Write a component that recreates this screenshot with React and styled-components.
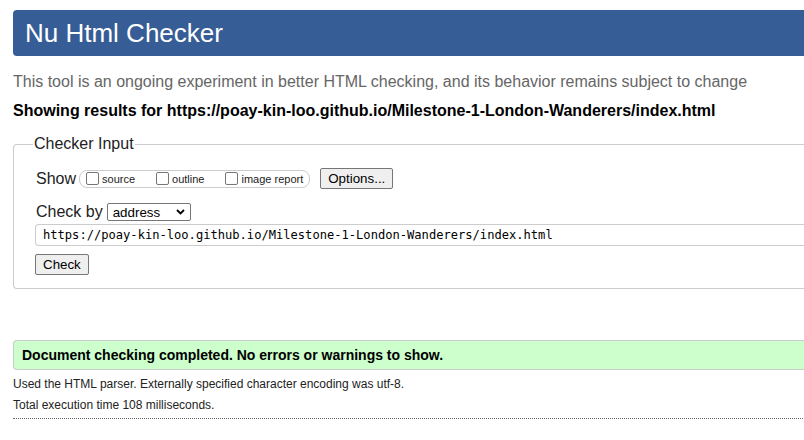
import React from 'react';
import styled, { createGlobalStyle } from 'styled-components';

const GlobalStyle = createGlobalStyle`
  html, body {
    margin: 0;
    padding: 0;
    background: #fff;
    overflow: hidden;
  }
  body {
    font-family: "Liberation Sans", Arial, sans-serif;
    color: #000;
  }
`;

const Page = styled.div`
  width: 830px;
  padding: 10px 0 0 13px;
`;

const Header = styled.h1`
  margin: 0;
  height: 46px;
  line-height: 46px;
  padding-left: 12px;
  background: #365d95;
  color: #fff;
  font-size: 26px;
  font-weight: normal;
  border-radius: 4px 0 0 4px;
`;

const Intro = styled.p`
  margin: 16px 0 0;
  font-size: 16px;
  line-height: 20px;
  color: #666;
`;

const Results = styled.p`
  margin: 10px 0 0;
  font-size: 16px;
  line-height: 18px;
  font-weight: bold;
`;

const Fieldset = styled.fieldset`
  margin: 15px 0 0;
  padding: 4px 0 13px 22px;
  border: 1px solid #ccc;
  border-right: none;
  border-radius: 4px 0 0 4px;
`;

const Legend = styled.legend`
  margin-left: -3px;
  padding: 0 1px;
  font-size: 16px;
  line-height: 18px;
  color: #222;
`;

const Row = styled.div`
  display: flex;
  align-items: center;
  margin-top: ${p => p.$top || 0}px;
`;

const Label = styled.span`
  font-size: 16px;
  color: #222;
`;

const Pill = styled.span`
  display: flex;
  align-items: center;
  height: 16px;
  padding: 0 6px 0 6px;
  border: 1px solid #ccc;
  border-radius: 8px;
  gap: 21px;
  margin-left: 3px;
`;

const Option = styled.label`
  display: flex;
  align-items: center;
  gap: 3px;
  font-size: 11px;
  color: #222;
`;

const Box = styled.input`
  appearance: none;
  margin: 0;
  width: 13px;
  height: 13px;
  border: 1px solid #767676;
  border-radius: 2px;
  background: #fff;
`;

const Button = styled.button`
  font-family: "Liberation Sans", Arial, sans-serif;
  font-size: 13.33px;
  height: 21px;
  padding: 0 ${p => p.$pad || 7}px;
  background: #efefef;
  color: #000;
  border: 1px solid #767676;
  border-radius: 2px;
  margin-left: ${p => p.$left || 0}px;
`;

const Select = styled.div`
  display: flex;
  align-items: center;
  justify-content: space-between;
  box-sizing: border-box;
  width: 84px;
  height: 18px;
  margin-left: 4px;
  padding: 0 5px 0 5px;
  border: 1px solid #767676;
  border-radius: 2px;
  font-size: 13.33px;
  color: #000;
`;

const UrlInput = styled.div`
  margin-top: 3px;
  margin-left: -1px;
  height: 20px;
  line-height: 20px;
  padding-left: 7px;
  border: 1px solid #ccc;
  border-right: none;
  border-radius: 4px 0 0 4px;
  font-family: "DejaVu Sans Mono", "Liberation Mono", monospace;
  font-size: 12.1px;
  color: #000;
`;

const CheckRow = styled.div`
  margin-top: 8px;
  margin-left: -1px;
`;

const Success = styled.p`
  margin: 51px 0 0;
  height: 28px;
  line-height: 28px;
  padding-left: 8px;
  background: #ccffcc;
  border: 1px solid #ccc;
  border-right: none;
  border-radius: 4px 0 0 4px;
  font-size: 14px;
  font-weight: bold;
`;

const Details = styled.div`
  margin-top: 4px;
  font-size: 12px;
  color: #222;
  border-bottom: 1px dotted #666;
  padding-bottom: 2px;

  p {
    margin: 0;
    line-height: 21px;
  }
`;

const Chevron = () => (
  <svg width="9" height="6" viewBox="0 0 9 6">
    <path d="M1 1l3.5 3.5L8 1" fill="none" stroke="#000" strokeWidth="1.8" />
  </svg>
);

export default function App() {
  return (
    <Page>
      <GlobalStyle />
      <Header>Nu Html Checker</Header>
      <Intro>This tool is an ongoing experiment in better HTML checking, and its behavior remains subject to change</Intro>
      <Results>Showing results for https://poay-kin-loo.github.io/Milestone-1-London-Wanderers/index.html</Results>
      <Fieldset>
        <Legend>Checker Input</Legend>
        <Row $top={11}>
          <Label>Show</Label>
          <Pill>
            <Option><Box type="checkbox" />source</Option>
            <Option><Box type="checkbox" />outline</Option>
            <Option><Box type="checkbox" />image report</Option>
          </Pill>
          <Button $left={10}>Options...</Button>
        </Row>
        <Row $top={14}>
          <Label>Check by</Label>
          <Select>
            <span>address</span>
            <Chevron />
          </Select>
        </Row>
        <UrlInput>https://poay-kin-loo.github.io/Milestone-1-London-Wanderers/index.html</UrlInput>
        <CheckRow>
          <Button>Check</Button>
        </CheckRow>
      </Fieldset>
      <Success>Document checking completed. No errors or warnings to show.</Success>
      <Details>
        <p>Used the HTML parser. Externally specified character encoding was utf-8.</p>
        <p>Total execution time 108 milliseconds.</p>
      </Details>
    </Page>
  );
}
